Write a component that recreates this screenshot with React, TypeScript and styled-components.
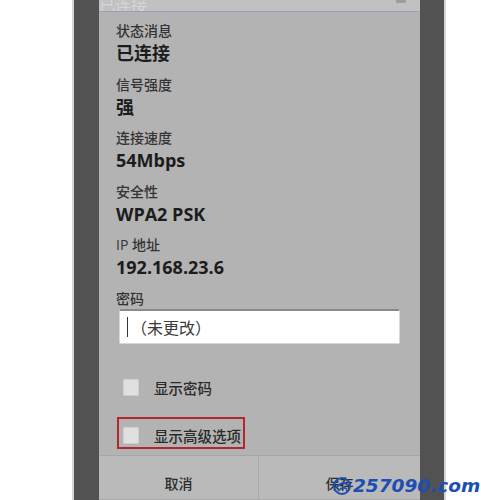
import React from "react";
import styled, { createGlobalStyle } from "styled-components";

const Global = createGlobalStyle`
  html, body { margin: 0; padding: 0; background: #ffffff; }
  body { font-family: "Open Sans", "Noto Sans CJK SC", sans-serif; }
  * { box-sizing: border-box; }
`;

const Page = styled.div`
  position: relative;
  width: 481px;
  height: 500px;
  overflow: hidden;
  background: #ffffff;
`;

const Frame = styled.div`
  margin-left: 72px;
  width: 374px;
  height: 500px;
  background: #525252;
  border-left: 2px solid #d4d4d4;
  border-right: 2px solid #d4d4d4;
  padding: 0 24px 0 25px;
`;

const Dialog = styled.div`
  height: 100%;
  display: flex;
  flex-direction: column;
  background: #b3b3b3;
`;

const TitleBar = styled.div`
  height: 12px;
  flex: none;
  background: #c1c1c1;
  border-bottom: 1px solid #9c9cc2;
  overflow: hidden;
  display: flex;
  align-items: flex-end;
  justify-content: space-between;
  padding-right: 14px;
`;

const TitleText = styled.span`
  font-family: "Noto Sans CJK SC", sans-serif;
  font-size: 16px;
  line-height: 16px;
  color: #d6d6d6;
  margin-bottom: -1px;
`;

const TitleIcon = styled.span`
  width: 10px;
  height: 14px;
  margin-bottom: 8px;
  background: #9e9e9e;
`;

const Content = styled.div`
  display: flex;
  flex-direction: column;
  padding: 9px 0 0 17px;
`;

const Fields = styled.div`
  display: flex;
  flex-direction: column;
  gap: 9.6px;
`;

const Field = styled.div`
  display: flex;
  flex-direction: column;
`;

const Label = styled.div`
  font-family: "Open Sans", "Noto Sans CJK SC", sans-serif;
  font-weight: 500;
  font-size: 14px;
  line-height: 20px;
  color: #333333;
`;

const Value = styled.div`
  font-family: "Open Sans", "Noto Sans CJK SC", sans-serif;
  font-weight: 700;
  font-size: 18px;
  line-height: 24px;
  color: #1c1c1c;
`;

const Input = styled.div`
  margin-left: 3px;
  width: 281px;
  height: 35px;
  background: #ffffff;
  border: 1px solid #d8d8d8;
  border-top: 2px solid #8a8a8a;
  border-radius: 2px;
  display: flex;
  align-items: center;
  padding-left: 7px;
  font-family: "Noto Sans CJK SC", sans-serif;
  font-size: 16px;
  color: #3a3a3a;
`;

const Caret = styled.span`
  width: 1px;
  height: 20px;
  background: #333;
  margin-right: 3px;
`;

const Checks = styled.div`
  display: flex;
  flex-direction: column;
  align-items: flex-start;
  gap: 16px;
  margin-top: 25px;
  padding-left: 18px;
`;

const CheckRow = styled.div<{ $marked?: boolean }>`
  height: 32px;
  display: flex;
  align-items: center;
  gap: 15px;
  padding: 8px 2px 3px 4px;
  border: 2px solid ${(p) => (p.$marked ? "#b3262b" : "transparent")};
`;

const Box = styled.span`
  width: 16px;
  height: 17px;
  background: #e0e0e0;
  border: 1px solid #cdcdcd;
  border-radius: 1px;
`;

const CheckText = styled.span`
  font-family: "Noto Sans CJK SC", sans-serif;
  font-weight: 500;
  font-size: 14.5px;
  line-height: 17px;
  color: #2a2a2a;
`;

const ButtonBar = styled.div`
  margin-top: auto;
  height: 45px;
  flex: none;
  display: grid;
  grid-template-columns: 160px 1fr;
  background: #bababa;
  border-top: 1px solid #a6a6a6;
  box-shadow: inset 0 -8px 0 -7px #a9a9a9;
`;

const Button = styled.div<{ $divider?: boolean }>`
  display: flex;
  justify-content: center;
  padding-top: 17px;
  font-family: "Noto Sans CJK SC", sans-serif;
  font-weight: 500;
  font-size: 14px;
  line-height: 20px;
  color: #2c2c2c;
  border-right: ${(p) => (p.$divider ? "1px solid #a8a8a8" : "none")};
`;

const Watermark = styled.div`
  position: absolute;
  left: 332px;
  top: 475px;
  display: flex;
  align-items: center;
  gap: 1px;
`;

const WaterText = styled.span`
  font-family: "DejaVu Sans", "Liberation Sans", sans-serif;
  font-weight: 700;
  font-style: italic;
  font-size: 18.5px;
  line-height: 22px;
  color: #1d4fb3;
`;

const fields = [
  ["状态消息", "已连接"],
  ["信号强度", "强"],
  ["连接速度", "54Mbps"],
  ["安全性", "WPA2 PSK"],
  ["IP 地址", "192.168.23.6"],
];

export default function App() {
  return (
    <Page>
      <Global />
      <Frame>
        <Dialog>
          <TitleBar>
            <TitleText>已连接</TitleText>
            <TitleIcon />
          </TitleBar>
          <Content>
            <Fields>
              {fields.map(([l, v]) => (
                <Field key={l}>
                  <Label>{l}</Label>
                  <Value>{v}</Value>
                </Field>
              ))}
              <Field>
                <Label>密码</Label>
                <Input>
                  <Caret />
                  （未更改）
                </Input>
              </Field>
            </Fields>
          </Content>
          <Checks>
            <CheckRow>
              <Box />
              <CheckText>显示密码</CheckText>
            </CheckRow>
            <CheckRow $marked>
              <Box />
              <CheckText>显示高级选项</CheckText>
            </CheckRow>
          </Checks>
          <ButtonBar>
            <Button $divider>取消</Button>
            <Button>保存</Button>
          </ButtonBar>
        </Dialog>
      </Frame>
      <Watermark>
        <svg width="20" height="20" viewBox="0 0 20 20">
          <circle cx="10" cy="10" r="8" fill="none" stroke="#1d4fb3" strokeWidth="2" />
          <path d="M4 12 Q10 4 16 9" fill="none" stroke="#1d4fb3" strokeWidth="2" />
          <path d="M6 15 Q11 10 15 13" fill="none" stroke="#1d4fb3" strokeWidth="1.6" />
        </svg>
        <WaterText>257090.com</WaterText>
      </Watermark>
    </Page>
  );
}
